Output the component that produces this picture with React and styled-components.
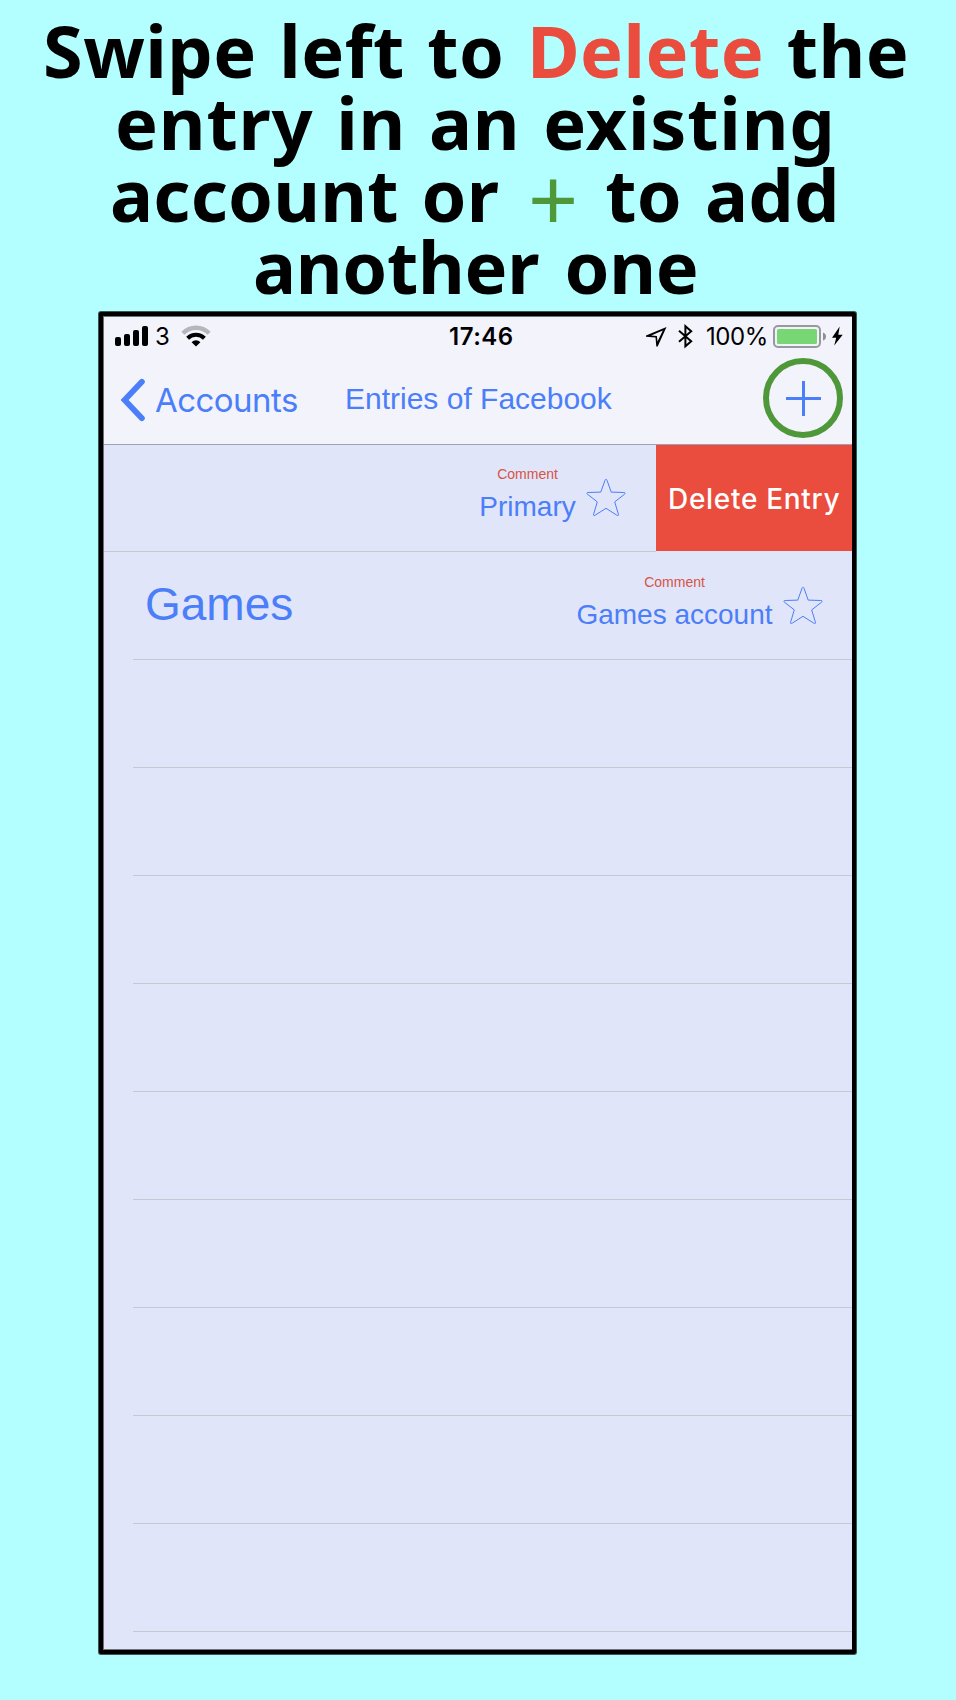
import React from 'react';
import styled, { createGlobalStyle } from 'styled-components';

const helv = '"Liberation Sans", Arial, sans-serif';
const ui = 'Inter, "Liberation Sans", sans-serif';
const blue = '#4b7ef9';
const red = '#ea4d3d';
const green = '#4f983a';

const Global = createGlobalStyle`
  body { margin: 0; background: #b3ffff; }
  * { box-sizing: border-box; }
`;
const Page = styled.main`
  width: 956px;
  height: 1700px;
  display: flex;
  flex-direction: column;
  background: #b3ffff;
  overflow: hidden;
`;
const Headline = styled.h1`
  margin: 0;
  height: 312px;
  padding-top: 14px;
  font: 700 72px/72px "Noto Sans", sans-serif;
  color: #000;
`;
const Line = styled.div`
  height: 72px;
  white-space: pre;
  padding-left: ${(p) => p.$left}px;
  letter-spacing: ${(p) => p.$track}px;
  word-spacing: ${(p) => p.$gap}px;
`;
const Accent = styled.span`
  color: ${(p) => p.$color};
`;
const PlusSign = styled.span`
  color: ${green};
  margin: 0 4px 0 6px;
  font-size: 88px;
  font-weight: 400;
  line-height: 0;
  letter-spacing: 0;
  vertical-align: -10px;
`;
const Phone = styled.section`
  width: 757px;
  height: 1342px;
  margin-left: 99px;
  padding: 1px 0 1px 1px;
  border: 4px solid #000;
  border-radius: 2px;
  box-shadow: 0 0 0 1px #3c5656;
  background: #6f7078;
  display: flex;
  flex-direction: column;
`;
const Header = styled.header`
  height: 128px;
  background: #f3f3fc;
  border-bottom: 1px solid #a0a1b2;
  display: flex;
  flex-direction: column;
`;
const StatusBar = styled.div`
  height: 40px;
  display: flex;
  align-items: flex-start;
`;
const NavBar = styled.nav`
  height: 87px;
  display: flex;
  align-items: flex-start;
`;
const Icon = styled.svg`
  display: block;
  flex: none;
  margin: ${(p) => p.$m || 0};
`;
const Text = styled.span`
  display: block;
  flex: none;
  white-space: nowrap;
  width: ${(p) => p.$w}px;
  margin: ${(p) => p.$m || 0};
  font-family: ${(p) => p.$font || helv};
  font-size: ${(p) => p.$size}px;
  font-weight: ${(p) => p.$weight || 400};
  line-height: ${(p) => p.$lh}px;
  letter-spacing: ${(p) => p.$track || 0}px;
  color: ${(p) => p.$color || blue};
`;
const AddButton = styled.button`
  width: 80px;
  height: 80px;
  margin: 1px 0 0 151px;
  padding: 0;
  border: 6px solid ${green};
  border-radius: 50%;
  background: transparent;
  display: grid;
  place-items: center;
`;
const List = styled.div`
  flex: 1;
  background: #e0e5f9;
  overflow: hidden;
`;
const Row = styled.div`
  height: ${(p) => p.$h || 108}px;
  margin-left: ${(p) => (p.$full ? 0 : 29)}px;
  display: flex;
  align-items: flex-start;
  background: linear-gradient(#c7c8d2, #c7c8d2) left bottom / ${(p) => (p.$full ? '552px' : '100%')} 1px no-repeat;
`;
const Comment = styled.div`
  width: ${(p) => p.$w}px;
  margin-left: ${(p) => p.$ml}px;
  display: flex;
  flex-direction: column;
  align-items: center;
`;
const DeleteButton = styled.button`
  width: 196px;
  height: 106px;
  margin: 0 0 0 auto;
  padding: 0 0 0 12px;
  border: 0;
  background: ${red};
  display: flex;
  align-items: flex-start;
  text-align: left;
`;

const Star = ({ m }) => (
  <Icon $m={m} width="40" height="40" viewBox="0 0 40 40" fill="none" stroke={blue} strokeWidth="1" strokeLinejoin="round">
    <path d="M20 1.2c.5 0 .9.6 1.2 1.6l4 11.3 12.6.4c1.8.1 1.8.9.6 1.8L28.7 23.9l3.6 12c.4 1.7-.2 2.2-1.6 1.2L20 30.3 9.3 37.1c-1.4 1-2 .5-1.6-1.2l3.6-12L1.6 16.3c-1.2-.9-1.2-1.7.6-1.8l12.6-.4 4-11.3c.3-1 .7-1.6 1.2-1.6z" />
  </Icon>
);

export default function App() {
  return (
    <>
      <Global />
      <Page>
        <Headline>
          <Line $left={43} $track={0.5} $gap={3.2}>Swipe left to <Accent $color={red}>Delete</Accent> the</Line>
          <Line $left={115} $track={0.8} $gap={3.3}>entry in an existing</Line>
          <Line $left={110} $track={0.2} $gap={4}>account or <PlusSign>+</PlusSign> to add</Line>
          <Line $left={253} $track={-0.3} $gap={7}>another one</Line>
        </Headline>
        <Phone>
          <Header>
            <StatusBar>
              <Icon $m="9px 0 0 11px" width="34" height="21" viewBox="0 0 34 21">
                <rect x="0" y="11" width="6" height="9" rx="2" />
                <rect x="9" y="8" width="6" height="12" rx="2" />
                <rect x="18" y="4" width="6" height="16" rx="2" />
                <rect x="27" y="0" width="6" height="20" rx="2" />
              </Icon>
              <Text $w={26} $m="8px 0 0 6px" $font={ui} $size={24} $lh={24} $color="#000">3</Text>
              <Icon $m="8px 0 0 0" width="30" height="22" viewBox="0 0 30 22" fill="none">
                <path d="M1.9 8.2a18.6 18.6 0 0 1 26.2 0" stroke="#b5b5bc" strokeWidth="4.4" />
                <path d="M6.6 13.2a12 12 0 0 1 16.8 0" stroke="#000" strokeWidth="4" />
                <path d="M10.6 17.2a6.2 6.2 0 0 1 8.8 0L15 21.5z" fill="#000" />
              </Icon>
              <Text $w={67} $m="8px 0 0 238px" $font={ui} $size={24} $weight={600} $lh={24} $track={0.5} $color="#000">17:46</Text>
              <Icon $m="10px 0 0 130px" width="21" height="21" viewBox="0 0 21 21">
                <path fillRule="evenodd" d="M20.5 0L0 8.4v1.4l9.5.6.8 9h1.4zM16.8 3.4L11.5 14.6l-.6-5.7-5.7-.5z" />
              </Icon>
              <Icon $m="7px 0 0 11px" width="15" height="25" viewBox="0 0 15 25" fill="none" stroke="#000" strokeWidth="2">
                <path d="M1 6.7L13.2 17.2 7.4 22.3V2.2L13.2 7.3 1 17.8" />
              </Icon>
              <Text $w={67} $m="8px 0 0 13px" $font={ui} $size={24} $lh={24} $track={-0.4} $color="#000">100%</Text>
              <Icon $m="8px 0 0 0" width="74" height="24" viewBox="0 0 74 24">
                <rect x="1" y="1" width="46" height="21" rx="4" fill="none" stroke="#98989f" strokeWidth="2" />
                <rect x="4" y="4" width="40" height="15" rx="1.5" fill="#78d774" />
                <path d="M50 7.5q3 1 3 4t-3 4z" fill="#8e8e96" />
                <path d="M66.7 1.5L59 12.7h4.2l-2 7.9L69.7 9.7h-4.4z" />
              </Icon>
            </StatusBar>
            <NavBar>
              <Icon $m="20px 0 0 15px" width="28" height="46" viewBox="0 0 28 46" fill="none" stroke={blue} strokeWidth="5.8" strokeLinecap="round" strokeLinejoin="miter">
                <path d="M22.9 4.8L5.6 23l17.3 18.2" />
              </Icon>
              <Text $w={170} $m="23px 0 0 8px" $font={ui} $size={33} $lh={40} $track={-0.55}>Accounts</Text>
              <Text $w={267} $m="24px 0 0 20px" $size={30} $lh={36}>Entries of Facebook</Text>
              <AddButton aria-label="Add entry">
                <svg width="36" height="36" viewBox="0 0 36 36" stroke={blue} strokeWidth="3"><path d="M18.5 1v35M1 18.5h35" /></svg>
              </AddButton>
            </NavBar>
          </Header>
          <List>
            <Row $full $h={107}>
              <Comment $w={97} $ml={375}>
                <Text $size={14} $lh={18} $m="20px 0 0" $color="#d65445">Comment</Text>
                <Text $size={28} $lh={32} $m="8px 0 0">Primary</Text>
              </Comment>
              <Star m="33px 0 0 10px" />
              <DeleteButton>
                <Text $w={180} $font={ui} $size={28} $weight={500} $lh={34} $m="37px 0 0" $track={0.7} $color="#fff">Delete Entry</Text>
              </DeleteButton>
            </Row>
            <Row>
              <Text $size={46} $lh={52} $w={150} $m="26px 0 0 12px">Games</Text>
              <Comment $w={197} $ml={281}>
                <Text $size={14} $lh={18} $m="21px 0 0" $color="#d65445">Comment</Text>
                <Text $size={28} $lh={32} $m="8px 0 0">Games account</Text>
              </Comment>
              <Star m="34px 0 0 10px" />
            </Row>
            {Array.from({ length: 9 }, (_, i) => (
              <Row key={i} />
            ))}
          </List>
        </Phone>
      </Page>
    </>
  );
}
